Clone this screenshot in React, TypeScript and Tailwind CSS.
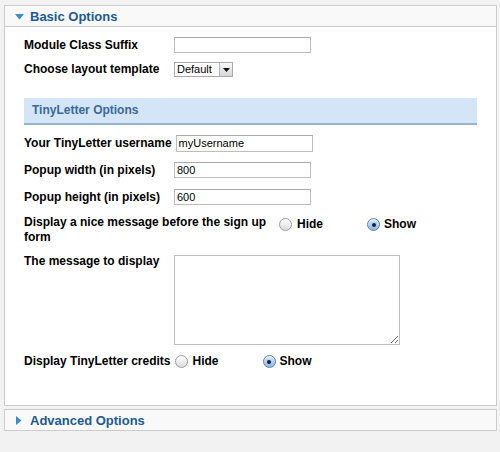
import React from "react";

const font = { fontFamily: '"Liberation Sans", Arial, Helvetica, sans-serif' };

function Radio({ checked }: { checked?: boolean }) {
  return checked ? (
    <span className="relative inline-flex h-[13px] w-[13px] shrink-0 items-center justify-center rounded-full border border-[#5d7fae] bg-gradient-to-b from-[#d9eafb] to-[#8db6e5] shadow-[inset_0_1px_1px_rgba(255,255,255,0.8)]">
      <span className="h-[4px] w-[4px] rounded-full bg-[#14203a]" />
    </span>
  ) : (
    <span className="inline-block h-[13px] w-[13px] shrink-0 rounded-full border border-[#9d9d9d] bg-gradient-to-b from-[#ffffff] to-[#dcdcdc]" />
  );
}

function RadioGroup({ value }: { value: "hide" | "show" }) {
  return (
    <div className="flex items-center">
      <div className="flex w-[88px] items-center gap-[5px]">
        <Radio checked={value === "hide"} />
        <span className="text-[12px] font-bold leading-[15px] text-black">Hide</span>
      </div>
      <div className="flex w-[88px] items-center gap-[4px]">
        <Radio checked={value === "show"} />
        <span className="text-[12px] font-bold leading-[15px] text-black">Show</span>
      </div>
    </div>
  );
}

function Label({ children, className = "" }: { children: React.ReactNode; className?: string }) {
  return (
    <div className={`min-w-[150px] shrink-0 pr-[4px] text-[12px] font-bold leading-[15px] text-black ${className}`}>
      {children}
    </div>
  );
}

function TextInput({ value = "", h = "h-[16px]" }: { value?: string; h?: string }) {
  return (
    <div
      className={`flex ${h} w-[137px] items-center border border-[#bdbdbd] border-t-[#a9a9a9] bg-white pl-[2px] text-[11px] leading-none text-black`}
    >
      {value}
    </div>
  );
}

function Triangle({ dir }: { dir: "down" | "right" }) {
  return dir === "down" ? (
    <svg width="9" height="6" viewBox="0 0 9 6" className="shrink-0">
      <polygon points="0,0 9,0 4.5,5.5" fill="#3b8ad0" />
    </svg>
  ) : (
    <svg width="6" height="9" viewBox="0 0 6 9" className="shrink-0">
      <polygon points="0,0 5.5,4.5 0,9" fill="#3b8ad0" />
    </svg>
  );
}

export default function App() {
  return (
    <div style={font} className="h-[452px] w-[500px] overflow-hidden bg-[#f2f2f2] pl-[4px] pr-[3px] pt-[5px]">
      {/* Basic Options panel */}
      <div className="border border-[#cccccc] bg-white">
        <div className="flex h-[21px] items-center border-b border-[#cccccc] bg-[#f9f9f9] pl-[10px] pt-[1px]">
          <Triangle dir="down" />
          <span className="ml-[6px] text-[13px] font-bold leading-[20px] text-[#1b5a92]">Basic Options</span>
        </div>

        <div className="px-[19px] pb-[36px] pt-[10px]">
          <div className="flex items-center">
            <Label>Module Class Suffix</Label>
            <TextInput />
          </div>

          <div className="mt-[9px] flex items-center">
            <Label>Choose layout template</Label>
            <div className="flex h-[15px] w-[59px] items-stretch border border-[#aaaaaa] bg-white">
              <span className="flex flex-1 items-center pl-[2px] text-[11px] leading-none text-black">Default</span>
              <span className="flex w-[13px] items-center justify-center border-l border-[#b5b5b5] bg-gradient-to-b from-[#fafafa] to-[#d6d6d6]">
                <svg width="7" height="4" viewBox="0 0 7 4">
                  <polygon points="0,0 7,0 3.5,4" fill="#111" />
                </svg>
              </span>
            </div>
          </div>

          <div className="mt-[21px] flex h-[27px] items-center border-b-2 border-[#9ab3cd] bg-[#d4e5f8] pl-[8px]">
            <span className="text-[12px] font-bold leading-[15px] text-[#3a6899]">TinyLetter Options</span>
          </div>

          <div className="mt-[10px] flex items-center">
            <Label>Your TinyLetter username</Label>
            <TextInput value="myUsername" h="h-[17px]" />
          </div>

          <div className="mt-[10px] flex items-center">
            <Label>Popup width (in pixels)</Label>
            <TextInput value="800" />
          </div>

          <div className="mt-[11px] flex items-center">
            <Label>Popup height (in pixels)</Label>
            <TextInput value="600" />
          </div>

          <div className="mt-[10px] flex items-start">
            <Label className="w-[255px]">Display a nice message before the sign up form</Label>
            <div className="pt-[2px]">
              <RadioGroup value="show" />
            </div>
          </div>

          <div className="mt-[9px] flex items-start">
            <Label>The message to display</Label>
            <textarea
              readOnly
              className="mt-[1px] h-[90px] w-[226px] resize border border-[#bdbdbd] bg-white text-[11px] outline-none"
            />
          </div>

          <div className="mt-[9px] flex items-center">
            <Label>Display TinyLetter credits</Label>
            <RadioGroup value="show" />
          </div>
        </div>
      </div>

      {/* Advanced Options panel */}
      <div className="mt-[3px] flex h-[22px] items-center border border-[#cccccc] bg-[#f9f9f9] pl-[11px] pt-[1px]">
        <Triangle dir="right" />
        <span className="ml-[8px] text-[13px] font-bold leading-[20px] text-[#1b5a92]">Advanced Options</span>
      </div>
    </div>
  );
}
